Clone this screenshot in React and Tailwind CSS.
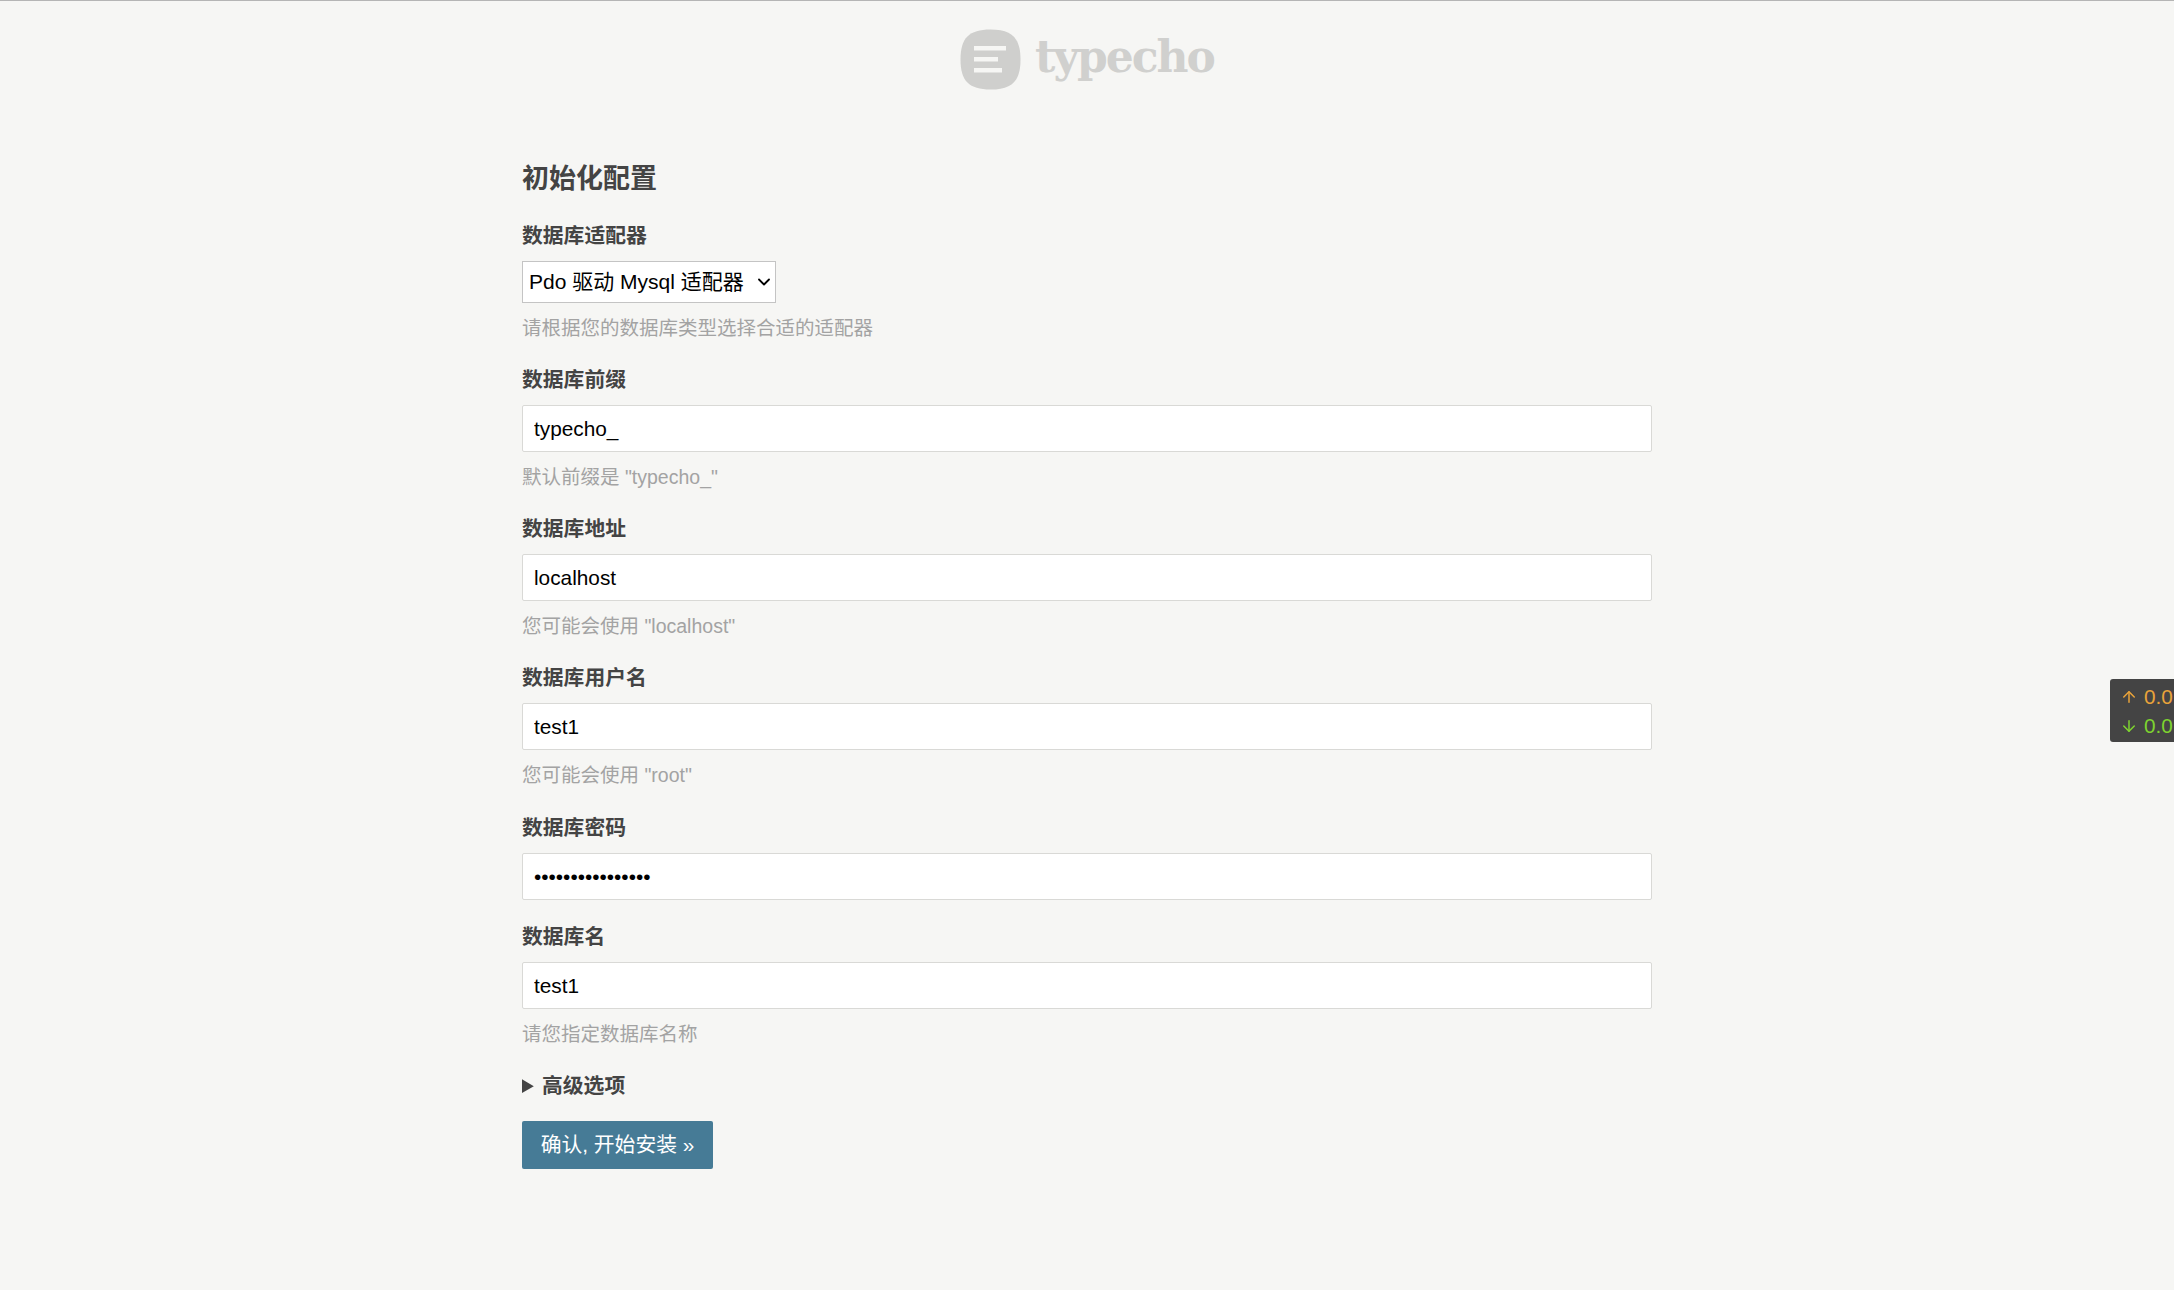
import React from "react";
import { ArrowUp, ArrowDown, ChevronDown } from "lucide-react";

const font = "font-['Liberation_Sans','Noto_Sans_CJK_SC',sans-serif]";

function Field({ label, value, hint, type = "text", gap = "mb-[22px]" }) {
  return (
    <li className={gap}>
      <label className="block text-[20.8px] leading-[30px] font-bold text-[#444] mb-[10px]">{label}</label>
      <input
        type={type}
        defaultValue={value}
        className="block w-full h-[47px] px-[11px] text-[20.8px] text-black bg-white border border-[#d9d9d6] rounded-[2px] outline-none"
      />
      {hint && <p className="mt-[10px] text-[19.5px] leading-[30px] text-[#a3a3a3]">{hint}</p>}
    </li>
  );
}

export default function App() {
  return (
    <div className={`relative min-h-[1290px] bg-[#f6f6f4] border-t border-[#b5b5b5] overflow-hidden ${font}`}>
      <div className="flex items-center justify-center h-[115px] pt-[1px]">
        <svg width="61" height="61" viewBox="0 0 61 61" className="mr-[14px]">
          <path d="M30.5 0.5C52 0.5 60.5 9 60.5 30.5C60.5 52 52 60.5 30.5 60.5C9 60.5 0.5 52 0.5 30.5C0.5 9 9 0.5 30.5 0.5Z" fill="#cfcfcd" />
          <rect x="14" y="17" width="32" height="4.5" fill="#f6f6f4" />
          <rect x="14" y="28" width="24" height="4.5" fill="#f6f6f4" />
          <rect x="14" y="39" width="28" height="4.5" fill="#f6f6f4" />
        </svg>
        <span className="font-['DejaVu_Serif',serif] text-[44px] font-bold leading-none tracking-[-2px] text-[#d0d0ce] mb-[4px]">typecho</span>
      </div>

      <form className="w-[1130px] ml-[522px]" onSubmit={(e) => e.preventDefault()}>
        <h1 className="text-[27px] leading-[40px] font-bold text-[#444] mt-[43px] mb-[22px]">初始化配置</h1>
        <ul>
          <li className="mb-[22px]">
            <label className="block text-[20.8px] leading-[30px] font-bold text-[#444] mb-[10px]">数据库适配器</label>
            <div className="relative w-[254px] h-[42px]">
              <select className="block w-full h-full pl-[6px] appearance-none text-[21px] text-black bg-white border border-[#c4c4c4] outline-none">
                <option>Pdo 驱动 Mysql 适配器</option>
              </select>
              <ChevronDown size={20} strokeWidth={2.2} className="absolute right-[2px] top-[11px] text-black pointer-events-none" />
            </div>
            <p className="mt-[10px] text-[19.5px] leading-[30px] text-[#a3a3a3]">请根据您的数据库类型选择合适的适配器</p>
          </li>
          <Field label="数据库前缀" value="typecho_" hint='默认前缀是 "typecho_"' />
          <Field label="数据库地址" value="localhost" hint='您可能会使用 "localhost"' />
          <Field label="数据库用户名" value="test1" hint='您可能会使用 "root"' gap="mb-[23px]" />
          <Field label="数据库密码" value="1234567890123456" type="password" gap="mb-[22px]" />
          <Field label="数据库名" value="test1" hint="请您指定数据库名称" />
        </ul>
        <details className="text-[20.8px] leading-[30px] font-bold text-[#444] mb-[20px]">
          <summary className="cursor-pointer"><span className="-ml-[2px]">高级选项</span></summary>
        </details>
        <button className="block h-[48px] w-[191px] text-[20.8px] text-white bg-[#467b96] rounded-[2px]">确认, 开始安装 »</button>
      </form>

      <div className="absolute right-0 top-[678px] w-[64px] h-[63px] bg-[#444] rounded-l-[3px] pl-[10px] pt-[3px] overflow-hidden text-[20.8px] leading-[29px] whitespace-nowrap">
        <div className="flex items-center h-[29px] text-[#e9a33a]"><ArrowUp size={18} className="mr-[6px] shrink-0" />0.0</div>
        <div className="flex items-center h-[29px] text-[#7ed32f]"><ArrowDown size={18} className="mr-[6px] shrink-0" />0.0</div>
      </div>
    </div>
  );
}
